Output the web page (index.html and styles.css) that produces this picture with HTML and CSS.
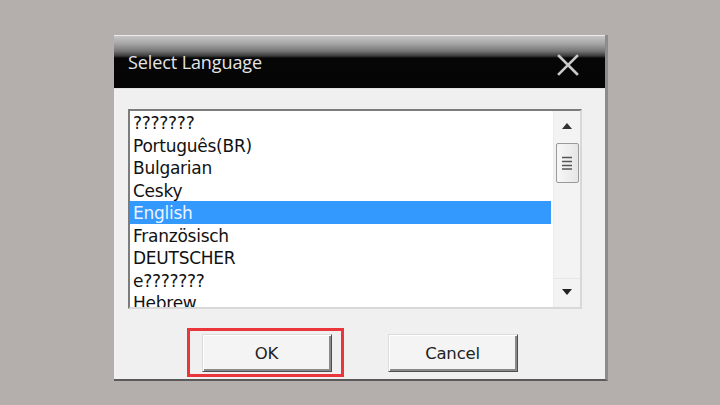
FILE: index.html
```html
<!DOCTYPE html>
<html>
<head>
<meta charset="utf-8">
<link rel="stylesheet" href="styles.css">
</head>
<body>
<div class="stage">
  <div class="dialog">
    <div class="titlebar">
      <span class="title">Select Language</span>
      <svg class="close" width="22" height="22" viewBox="0 0 22 22"><path d="M2 2 L20 20 M20 2 L2 20" stroke="#c9c9c9" stroke-width="2.6" stroke-linecap="square"/></svg>
    </div>
    <div class="body">
      <div class="listbox">
        <ul class="items">
          <li>???????</li>
          <li>Português(BR)</li>
          <li>Bulgarian</li>
          <li>Cesky</li>
          <li class="sel">English</li>
          <li>Französisch</li>
          <li>DEUTSCHER</li>
          <li>e???????</li>
          <li>Hebrew</li>
        </ul>
        <div class="sb">
          <div class="sb-btn"><svg width="10" height="6" viewBox="0 0 10 6"><path d="M0 6 L5 0 L10 6 Z" fill="#333"/></svg></div>
          <div class="thumb"><svg width="12" height="14" viewBox="0 0 12 14"><path d="M1 1.5H11M1 5.5H11M1 9.5H11M1 13H11" stroke="#555" stroke-width="1.4"/></svg></div>
          <div class="track"></div>
          <div class="sb-btn down"><svg width="10" height="6" viewBox="0 0 10 6"><path d="M0 0 L10 0 L5 6 Z" fill="#222"/></svg></div>
        </div>
      </div>
      <div class="buttons">
        <div class="ok-wrap">
          <button class="btn">OK</button>
          <span class="mark"></span>
        </div>
        <button class="btn">Cancel</button>
      </div>
    </div>
  </div>
</div>
</body>
</html>
```
FILE: styles.css
```css
html, body {
  margin: 0;
  padding: 0;
}
body {
  background: #b4afac;
  width: 720px;
  height: 405px;
  overflow: hidden;
}
.stage {
  padding-top: 35px;
  padding-left: 114px;
}
.dialog {
  width: 491px;
  height: 344px;
  border-right: 3px solid #8e8b8a;
  border-bottom: 2px solid #5a5a5a;
  background: #f0f0f0;
  display: flex;
  flex-direction: column;
}
.titlebar {
  height: 52px;
  border-top: 1px solid #ececec;
  background: linear-gradient(#c6c6c6 0px, #a4a4a4 8px, #767676 15px, #3a3a3a 20px, #060606 22px, #050505 100%);
  display: flex;
  align-items: center;
  justify-content: space-between;
  padding: 0 26px 0 14px;
}
.title {
  font-family: "Open Sans", "Noto Sans", sans-serif;
  font-size: 18px;
  color: #e4e4e4;
  letter-spacing: -0.1px;
}
.close {
  margin-top: 6px;
}
.body {
  flex: 1;
  background: #f0f0f0;
  padding: 20px 23px 0 14px;
  border-top: 1px solid #e2e2e2;
}
.listbox {
  width: 450px;
  height: 196px;
  border: 2px solid;
  border-color: #7c7c7c #d8d8d8 #d8d8d8 #7c7c7c;
  background: #fff;
  display: flex;
  overflow: hidden;
}
.items {
  list-style: none;
  margin: 0;
  padding: 0;
  flex: 1;
  font-family: "DejaVu Sans", "Liberation Sans", sans-serif;
  font-size: 17px;
  color: #111;
}
.items li {
  height: 22.5px;
  box-sizing: border-box;
  padding-top: 2px;
  line-height: 20.5px;
  padding-left: 3px;
  margin-right: 2px;
  letter-spacing: -0.25px;
  white-space: nowrap;
}
.items li.sel {
  background: #3399ff;
  color: #eaf4ff;
}
.sb {
  width: 27px;
  background: #f3f3f3;
  border-left: 1px solid #ececec;
  display: flex;
  flex-direction: column;
  align-items: center;
  box-sizing: border-box;
  padding-bottom: 2px;
}
.sb-btn {
  height: 30px;
  width: 100%;
  display: flex;
  align-items: center;
  justify-content: center;
}
.sb-btn.down {
  height: 26px;
  border-top: 1px solid #e6e6e6;
}
.thumb {
  width: 23px;
  height: 40px;
  margin-top: 2px;
  box-sizing: border-box;
  border: 1px solid #9a9a9a;
  border-radius: 2px;
  background: linear-gradient(90deg, #f7f7f7, #e6e6e6);
  display: flex;
  align-items: center;
  justify-content: center;
}
.track {
  flex: 1;
}
.buttons {
  display: flex;
  justify-content: center;
  gap: 56px;
  margin-top: 25px;
  padding-left: 9px;
}
.ok-wrap {
  position: relative;
  display: flex;
}
.mark {
  position: absolute;
  left: -15px;
  right: -12px;
  top: -6px;
  bottom: -5px;
  border: 3px solid #e8363c;
}
.btn {
  width: 130px;
  height: 38px;
  margin: 0;
  padding: 0;
  font-family: "DejaVu Sans", "Liberation Sans", sans-serif;
  font-size: 16.5px;
  color: #222;
  background: #f4f4f4;
  border: 1px solid;
  border-color: #dcdcdc #4e4e4e #4e4e4e #dcdcdc;
  box-shadow: inset 1px 1px 0 #ffffff, inset -2px -2px 0 #8a8a8a;
  letter-spacing: -0.2px;
}
```
